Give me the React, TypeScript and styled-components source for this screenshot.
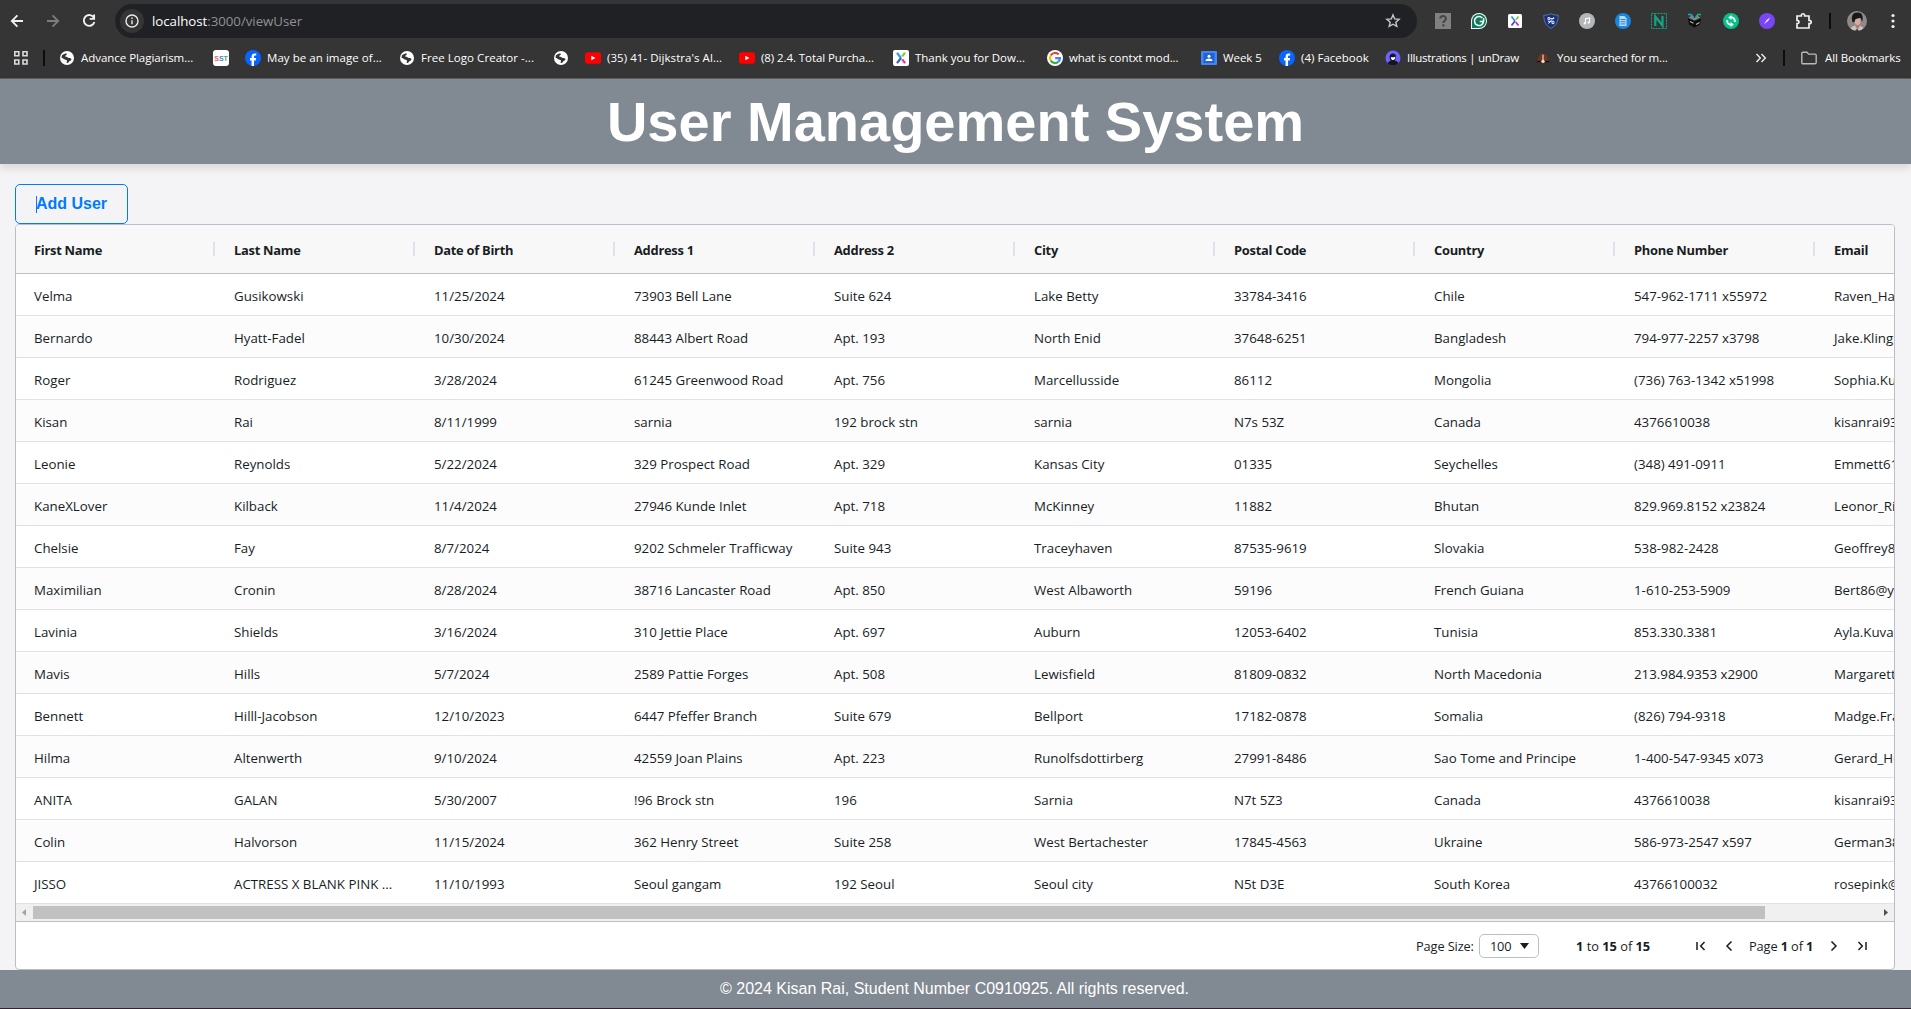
import React from "react";
import styled, { createGlobalStyle } from "styled-components";

const UI_FONT = `"Open Sans", "Noto Sans", sans-serif`;
const ARIAL = `"Liberation Sans", Arial, sans-serif`;

const GlobalStyle = createGlobalStyle`
  * { box-sizing: border-box; }
  body { margin: 0; background: #f4f4f7; overflow: hidden; }
  button { font: inherit; }
`;

const Screen = styled.div`
  width: 1911px;
  height: 1009px;
  display: flex;
  flex-direction: column;
  overflow: hidden;
  font-family: ${UI_FONT};
`;

/* ---------- browser chrome ---------- */

const Chrome = styled.div`
  flex: none;
  height: 79px;
  background: #353535;
  border-bottom: 1px solid #5b5d5f;
  color: #fff;
`;

const Toolbar = styled.div`
  height: 42px;
  display: flex;
  align-items: center;
`;

const NavButtons = styled.div`
  display: flex;
  gap: 18px;
  padding-left: 8px;
  width: 115px;
  svg { display: block; }
`;

const AddressBar = styled.div`
  width: 1302px;
  height: 34px;
  border-radius: 17px;
  background: #202124;
  display: flex;
  align-items: center;
  padding: 0 16px 0 5px;
`;

const InfoBadge = styled.span`
  width: 24px;
  height: 24px;
  border-radius: 50%;
  background: #353535;
  display: flex;
  align-items: center;
  justify-content: center;
  margin-right: 8px;
`;

const Url = styled.span`
  flex: 1;
  font-size: 13.3px;
  line-height: 20px;
  letter-spacing: -0.05px;
  color: #8f9194;
  b { font-weight: 400; color: #fff; }
`;

const Extensions = styled.div`
  display: flex;
  gap: 20px;
  margin-left: 18px;
  svg { display: block; }
`;

const Divider = styled.span<{ $left: number; $right: number }>`
  flex: none;
  width: 2px;
  height: 16px;
  background: #0c0c0c;
  margin-left: ${(p) => p.$left}px;
  margin-right: ${(p) => p.$right}px;
`;

const MoreDots = styled.svg`
  margin-left: 24px;
`;

const BookmarksBar = styled.div`
  height: 32px;
  display: flex;
  align-items: center;
  padding-left: 13px;
`;

const Bookmark = styled.div<{ $w: number; $gap?: number; $track?: number }>`
  flex: none;
  width: ${(p) => p.$w}px;
  display: flex;
  align-items: center;
  gap: ${(p) => p.$gap ?? 6}px;
  font-size: 11.5px;
  line-height: 16px;
  letter-spacing: ${(p) => p.$track ?? -0.08}px;
  white-space: nowrap;
  svg { flex: none; display: block; }
`;

/* ---------- page ---------- */

const Banner = styled.header`
  flex: none;
  height: 85px;
  background: #818a93;
  box-shadow: 0 4px 8px rgba(0, 0, 0, 0.12);
  display: flex;
  justify-content: center;
  padding-top: 11px;
  position: relative;
`;

const Title = styled.h1`
  margin: 0;
  font: bold 56px/64px ${ARIAL};
  color: #fff;
  white-space: nowrap;
`;

const Content = styled.main`
  flex: none;
  height: 806px;
  padding: 20px 16px 0 15px;
`;

const AddButton = styled.button`
  display: flex;
  align-items: center;
  width: 113px;
  height: 40px;
  padding: 0 20px;
  background: transparent;
  border: 1px solid #007bff;
  border-radius: 5px;
  color: #007bff;
  font: bold 16px/18px ${ARIAL};
  white-space: nowrap;
`;

const Caret = styled.i`
  width: 1px;
  height: 17px;
  margin: 0 -1px 0 0;
  background: #007bff;
`;

const Grid = styled.section`
  width: 1880px;
  height: 746px;
  border: 1px solid #babfc7;
  border-radius: 4px;
  overflow: hidden;
  background: #fff;
  color: #181d1f;
`;

const HeadRow = styled.div`
  display: flex;
  height: 49px;
  background: #f8f8f8;
  border-bottom: 1px solid #babfc7;
`;

const HeadCell = styled.div`
  flex: none;
  width: 200px;
  display: flex;
  align-items: center;
  justify-content: space-between;
  padding: 2px 1px 0 18px;
  font-size: 12.9px;
  font-weight: 700;
  letter-spacing: -0.27px;
  white-space: nowrap;
  &::after {
    content: "";
    width: 2px;
    height: 14px;
    margin-bottom: 3px;
    background: #dde2eb;
  }
`;

const Row = styled.div<{ $odd: boolean }>`
  display: flex;
  height: 42px;
  background: ${(p) => (p.$odd ? "#fcfcfc" : "#fff")};
  border-bottom: 1px solid #dde2eb;
`;

const Cell = styled.div`
  flex: none;
  width: 200px;
  height: 41px;
  padding: 1px 17px 0 18px;
  font-size: 13.3px;
  line-height: 43px;
  white-space: nowrap;
  overflow: hidden;
  text-overflow: ellipsis;
`;

const Scrollbar = styled.div`
  display: flex;
  align-items: center;
  height: 17px;
  background: #f0f0f0;
`;

const ScrollArrow = styled.svg`
  flex: none;
  width: 17px;
  height: 17px;
`;

const Track = styled.div`
  flex: 1;
`;

const Thumb = styled.div`
  width: 1732px;
  height: 13px;
  background: #c1c1c1;
`;

const Pager = styled.div`
  display: flex;
  align-items: center;
  height: 48px;
  border-top: 1px solid #babfc7;
  padding-left: 1400px;
  font-size: 12.8px;
  white-space: nowrap;
  svg { flex: none; display: block; }
`;

const PagerText = styled.span<{ $w: number; $track?: number }>`
  flex: none;
  width: ${(p) => p.$w}px;
  padding-top: 1px;
  letter-spacing: ${(p) => p.$track ?? -0.12}px;
`;

const SizeSelect = styled.div`
  flex: none;
  width: 60px;
  height: 24px;
  border: 1px solid #babfc7;
  border-radius: 5px;
  display: flex;
  align-items: center;
  justify-content: space-between;
  padding: 1px 9px 0 10px;
  margin-right: 37px;
  letter-spacing: -0.2px;
`;

const PagerIcon = styled.svg<{ $left?: number; $right?: number }>`
  margin-left: ${(p) => p.$left ?? 0}px;
  margin-right: ${(p) => p.$right ?? 0}px;
  fill: none;
  stroke: #181d1f;
  stroke-width: 1.5;
`;

const Footer = styled.footer`
  flex: none;
  height: 38px;
  padding-right: 2px;
  background: #818a93;
  color: #fff;
  font: 16px/37px ${ARIAL};
  text-align: center;
`;

const DesktopEdge = styled.div`
  height: 1px;
  background: #35222f;
`;

/* ---------- icons ---------- */

const Globe = () => (
  <svg width="16" height="16" viewBox="0 0 16 16">
    <circle cx="8" cy="8" r="7" fill="#fff" />
    <path d="M3 5.200C4.500 3.800 6.500 3.400 7.500 3.500c.8.500.2 1.500-.8 1.900-.9.400-.5 1.300.6 1.400 1.500.1 1.500 1.200 2.500 1.300 1.200.1 2.700.200 2.600 1.400-.3 1.300-1.900 1.200-2.400 2.200-.4.900-1.200 1.300-2.300 1.300-.3-.9.500-1.300.3-2.200-.4-1.200-2.200-.7-3.100-1.700-.6-.8-1.500-1.300-2.400-1.400z" fill="#353535" />
  </svg>
);

const FacebookIcon = () => (
  <svg width="16" height="16" viewBox="0 0 16 16">
    <circle cx="8" cy="8" r="8" fill="#0866ff" />
    <path d="M6.600 16v-5.500H5V8h1.600V6.800c0-2.300 1.100-3.400 3.300-3.400.5 0 1 .05 1.300.1v2.100h-.9c-1 0-1.300.4-1.300 1.300V8h2.100l-.4 2.500H9V16z" fill="#fff" />
  </svg>
);

const YouTubeIcon = () => (
  <svg width="16" height="16" viewBox="0 0 16 16">
    <rect y="2.200" width="16" height="11.600" rx="2.800" fill="#f00" />
    <path d="M6.300 5.700v4.600L10.500 8z" fill="#fff" />
  </svg>
);

const XmindIcon = () => (
  <svg width="16" height="16" viewBox="0 0 16 16">
    <rect width="16" height="16" rx="2" fill="#fff" />
    <path d="M4 2.800 8 8" stroke="#2a9fd8" strokeWidth="2.200" />
    <path d="M8 8 4 13.200" stroke="#3263c8" strokeWidth="2.200" />
    <path d="M12 2.800 9.200 6.400" stroke="#8bc53f" strokeWidth="2.200" />
    <path d="m9.200 9.400 2.900 3.800" stroke="#ef2b8d" strokeWidth="2.200" />
  </svg>
);

const SstIcon = () => (
  <svg width="16" height="16" viewBox="0 0 16 16">
    <rect width="16" height="16" rx="3" fill="#fff" />
    <text x="1.300" y="10.500" fontFamily="Liberation Sans, sans-serif" fontSize="7" fontWeight="700">
      <tspan fill="#e0686c">S</tspan>
      <tspan fill="#4a86c5">S</tspan>
      <tspan fill="#4aa583">T</tspan>
    </text>
  </svg>
);

const GoogleIcon = () => (
  <svg width="16" height="16" viewBox="0 0 16 16">
    <circle cx="8" cy="8" r="8" fill="#fff" />
    <g fill="none" strokeWidth="2.200">
      <path d="M11.700 4.500A5 5 0 0 0 3.700 5.500" stroke="#ea4335" />
      <path d="M3.700 5.500a5 5 0 0 0 0 5" stroke="#fbbc05" />
      <path d="M3.700 10.500a5 5 0 0 0 7.500 1.400" stroke="#34a853" />
      <path d="M11.200 11.900A5 5 0 0 0 13 8.200H8.200" stroke="#4285f4" />
    </g>
  </svg>
);

const ClassroomIcon = () => (
  <svg width="16" height="16" viewBox="0 0 16 16">
    <rect y="1" width="16" height="14" rx="1" fill="#4285f4" />
    <rect x="2.500" y="3" width="11" height="10" fill="#1f62d6" />
    <circle cx="8" cy="6.300" r="1.500" fill="#fff" />
    <path d="M4.500 11c0-1.700 1.600-2.400 3.500-2.400s3.500.7 3.500 2.400z" fill="#fff" />
  </svg>
);

const UndrawIcon = () => (
  <svg width="16" height="16" viewBox="0 0 16 16">
    <circle cx="8" cy="8" r="7.500" fill="#6c63ff" />
    <path d="M2.600 13.200C3 11.500 5 11 5.800 10.500 4.300 9 4 5.500 5.800 4.200c1.700-1.300 4.500-.8 5 1.300.4 1.800 0 3.600-1 4.900 1.500.6 3.300 1.200 3.600 2.800A7.500 7.500 0 0 1 2.600 13.200z" fill="#16151f" />
    <path d="M5.800 7.200c1.300.3 3.200.1 4.500-.4.2 1.900-.8 3.300-2.200 3.300-1.300 0-2.300-1.300-2.300-2.900z" fill="#fff" />
  </svg>
);

const BellIcon = () => (
  <svg width="16" height="16" viewBox="0 0 16 16">
    <path d="M1.500 11C3.500 8.500 3 4 7.200 3.800v8.600zM14.500 11C12.500 8.500 13 4 8.800 3.800v8.600z" fill="#6e3518" />
    <path d="M7.400 4.500h1.200v5L10 11.700 8 13.300 6 11.700l1.400-2.200z" fill="#f0dccb" />
    <path d="M1.800 11.500h3.800M10.400 11.500h3.800" stroke="#1a1210" strokeWidth="1.500" />
  </svg>
);

const BackArrow = () => (
  <svg width="18" height="18" viewBox="0 0 18 18" fill="none" stroke="#f1f1f1" strokeWidth="1.800">
    <path d="M15 9H4M9.400 3.400 3.800 9l5.600 5.600" />
  </svg>
);

const ForwardArrow = () => (
  <svg width="18" height="18" viewBox="0 0 18 18" fill="none" stroke="#7d7d7d" strokeWidth="1.800">
    <path d="M3 9h11M8.600 3.400 14.200 9l-5.600 5.600" />
  </svg>
);

const Reload = () => (
  <svg width="18" height="18" viewBox="0 0 18 18" fill="none" stroke="#f1f1f1" strokeWidth="1.900">
    <path d="M14 5.900A5.400 5.400 0 1 0 14.400 10" />
    <path d="M14.100 2.500v4.400H9.700" />
  </svg>
);

const Info = () => (
  <svg width="14" height="14" viewBox="0 0 14 14" fill="none" stroke="#e8eaed" strokeWidth="1.400">
    <circle cx="7" cy="7" r="6" />
    <path d="M7 6.300v4M7 3.500V5" />
  </svg>
);

const Star = () => (
  <svg width="16" height="16" viewBox="0 0 16 16" fill="none" stroke="#c7c7c7" strokeWidth="1.400">
    <path d="m8 1.900 1.700 4 4.400.4-3.300 2.900 1 4.200L8 11.200l-3.800 2.200 1-4.200-3.300-2.900 4.400-.4z" />
  </svg>
);

const AppsIcon = () => (
  <svg width="16" height="16" viewBox="0 0 16 16" fill="none" stroke="#dcdcdc" strokeWidth="1.600">
    <path d="M1.800 1.800h4v4h-4zM10 1.800h4v4h-4zM1.800 10h4v4h-4zM10 10h4v4h-4z" />
  </svg>
);

const Folder = () => (
  <svg width="16" height="14" viewBox="0 0 16 14" fill="none" stroke="#b9b9b9" strokeWidth="1.400">
    <path d="M.8 11.500V2.500q0-1.200 1.200-1.200h4l1.600 1.800H14q1.200 0 1.200 1.200v7.200q0 1.200-1.200 1.200H2q-1.200 0-1.200-1.200z" />
  </svg>
);

const PuzzleIcon = styled.svg`
  margin: -1px 0;
`;

const ExtensionIcons = () => (
  <Extensions>
    <svg width="16" height="16" viewBox="0 0 16 16">
      <rect width="16" height="16" fill="#808080" />
      <path d="M5.300 5.600C5.300 2.300 11 2.300 11 5.500c0 2-2.600 2.200-2.600 4.600" fill="none" stroke="#454545" strokeWidth="2" />
      <path d="M7.300 11.300h2.200v2.100H7.300z" fill="#454545" />
    </svg>
    <svg width="16" height="16" viewBox="0 0 16 16">
      <path d="M0 8a8 8 0 1 1 8 8H0z" fill="#fff" />
      <path d="M.9 8a7.100 7.100 0 1 1 7.100 7.100H.9z" fill="#0c7a5c" />
      <path d="M11.300 4.900a4.500 4.500 0 1 0 1.200 3.500H8.700M12.600 5.300v3.300" fill="none" stroke="#fff" strokeWidth="1.500" />
    </svg>
    <svg width="16" height="16" viewBox="0 0 16 16">
      <rect x="1" y="1" width="14" height="14" rx="1.500" fill="#fff" />
      <path d="M4.500 3.500 8 8" stroke="#2a9fd8" strokeWidth="1.800" />
      <path d="m8 8-3.500 4.500" stroke="#444dbd" strokeWidth="1.800" />
      <path d="M11.500 3.500 9 6.800" stroke="#8bc53f" strokeWidth="1.800" />
      <path d="m8.800 9 2.700 3.500" stroke="#bd2ec4" strokeWidth="1.800" />
    </svg>
    <svg width="16" height="16" viewBox="0 0 16 16">
      <path d="M.8 2.200C3.500 2.200 6 1.800 8 .6c2 1.200 4.500 1.600 7.200 1.600 0 6.500-2 10.500-7.200 13.200C2.800 12.700.8 8.700.8 2.200z" fill="#16307a" stroke="#7283b4" strokeWidth=".8" />
      <path d="M10.800 4.300 5.500 10.700M5 4.500h1.800v2.300H5zM9 8.200h1.900v2.400H9zM7.300 5.500h4M4.900 8.700h3.700" fill="none" stroke="#e5e9f5" strokeWidth="1" />
    </svg>
    <svg width="16" height="16" viewBox="0 0 16 16">
      <circle cx="8" cy="8" r="8" fill="#b5b8bb" />
      <path d="M6.500 10.300V5.700l4-.8v4.500" fill="none" stroke="#fff" strokeWidth="1.100" />
      <circle cx="5.700" cy="10.400" r="1.100" fill="#fff" />
      <circle cx="9.700" cy="9.600" r="1.100" fill="#fff" />
    </svg>
    <svg width="16" height="16" viewBox="0 0 16 16">
      <circle cx="8" cy="8" r="8" fill="#1c86dd" />
      <path d="M4.500 3h4.800l2.200 2.200v7.800h-7z" fill="#b9dcf8" />
      <path d="M5.500 6.500h5M5.500 8.700h5M5.500 10.900h5" stroke="#1c86dd" strokeWidth="1" />
    </svg>
    <svg width="16" height="16" viewBox="0 0 16 16">
      <rect x=".5" y=".5" width="15" height="15" fill="none" stroke="#12a584" strokeDasharray="2 1" />
      <path d="M4.300 13V3.500l7.200 9V3" fill="none" stroke="#12a584" strokeWidth="2.200" />
    </svg>
    <svg width="16" height="16" viewBox="0 0 16 16">
      <path d="M1 5.500 7.500 8v6.500L2 11.500zM14 5.500 7.500 8v6.500l5.500-3z" fill="#0d0d0d" />
      <path d="m1.500 4.500 3-1.700 3 2.200 3-2.200 3 1.700-6 3z" fill="#858585" />
      <path d="m3 8.500 3.500 1.700M9 11.500l3.500-2" stroke="#b5b5b5" strokeWidth="1.200" />
      <path d="M1 1.500h3l2.500 3" fill="none" stroke="#1aa7d9" strokeWidth="1.700" />
      <path d="M14 1.500h-3L8.700 4.500" fill="none" stroke="#19b97c" strokeWidth="1.700" />
    </svg>
    <svg width="16" height="16" viewBox="0 0 16 16">
      <circle cx="8" cy="8" r="8" fill="#08c18a" />
      <path d="M11.800 9V7.500A3.300 3.300 0 0 0 8 4.500M4.200 7v1.500A3.300 3.300 0 0 0 8 11.500" fill="none" stroke="#fff" strokeWidth="1.800" />
      <path d="M8.400 2v5L5.200 4.500zM7.600 9v5l3.200-2.500z" fill="#fff" />
    </svg>
    <svg width="16" height="16" viewBox="0 0 16 16">
      <circle cx="8" cy="8" r="8" fill="#7a45f5" />
      <path d="m5 11.200 2.800-4.500L11.300 4.200 9.200 8z" fill="#e9dcff" />
    </svg>
    <PuzzleIcon width="18" height="18" viewBox="0 0 18 18">
      <path d="M2 4h4.300c-.3-3 3.700-3 3.400 0H14v4.300c3 0 3 3.400 0 3.400V16H2v-4.300c2.600 0 2.600-3.400 0-3.400z" fill="none" stroke="#f1f1f1" strokeWidth="1.700" />
    </PuzzleIcon>
  </Extensions>
);

const Avatar = () => (
  <svg width="20" height="20" viewBox="0 0 20 20">
    <defs>
      <clipPath id="avatarClip">
        <circle cx="10" cy="10" r="10" />
      </clipPath>
    </defs>
    <g clipPath="url(#avatarClip)">
      <rect width="20" height="20" fill="#8f8a88" />
      <path d="M3 20c0-4 3.500-5.500 7-5.500s7 1.500 7 5.500z" fill="#c9c5c5" />
      <path d="M8.500 12h4v4l-2 2.500-2-2.500z" fill="#a98273" />
      <ellipse cx="10.600" cy="9.800" rx="3" ry="4.200" fill="#d3ada0" />
      <path d="M5.500 11C3.500 4.500 6.500 1.200 11 1.500c4.300.2 5.500 3.700 4.200 9.200-.8-1.500-1.300-3-2-4-1.500.8-4 .8-5.200 2 0 1.500-.5 3-2.500 2.300z" fill="#1a1718" />
      <path d="M10 18 12.500 20h-5z" fill="#27272b" />
    </g>
  </svg>
);

const BOOKMARKS: { icon: React.ReactNode; label?: string; w: number; track?: number }[] = [
  { icon: <Globe />, label: "Advance Plagiarism...", w: 154, track: -0.04 },
  { icon: <SstIcon />, w: 32 },
  { icon: <FacebookIcon />, label: "May be an image of...", w: 154, track: 0.05 },
  { icon: <Globe />, label: "Free Logo Creator -...", w: 154, track: 0.05 },
  { icon: <Globe />, w: 32 },
  { icon: <YouTubeIcon />, label: "(35) 41- Dijkstra's Al...", w: 154, track: 0.05 },
  { icon: <YouTubeIcon />, label: "(8) 2.4. Total Purcha...", w: 154 },
  { icon: <XmindIcon />, label: "Thank you for Dow...", w: 154, track: -0.02 },
  { icon: <GoogleIcon />, label: "what is contxt mod...", w: 154 },
  { icon: <ClassroomIcon />, label: "Week 5", w: 78 },
  { icon: <FacebookIcon />, label: "(4) Facebook", w: 106, track: 0.02 },
  { icon: <UndrawIcon />, label: "Illustrations | unDraw", w: 150, track: -0.28 },
  { icon: <BellIcon />, label: "You searched for m...", w: 220, track: -0.14 },
];

const COLUMNS = [
  "First Name", "Last Name", "Date of Birth", "Address 1", "Address 2",
  "City", "Postal Code", "Country", "Phone Number", "Email",
];

const USERS = [
  ["Velma", "Gusikowski", "11/25/2024", "73903 Bell Lane", "Suite 624", "Lake Betty", "33784-3416", "Chile", "547-962-1711 x55972", "Raven_Ha"],
  ["Bernardo", "Hyatt-Fadel", "10/30/2024", "88443 Albert Road", "Apt. 193", "North Enid", "37648-6251", "Bangladesh", "794-977-2257 x3798", "Jake.Kling"],
  ["Roger", "Rodriguez", "3/28/2024", "61245 Greenwood Road", "Apt. 756", "Marcellusside", "86112", "Mongolia", "(736) 763-1342 x51998", "Sophia.Ku"],
  ["Kisan", "Rai", "8/11/1999", "sarnia", "192 brock stn", "sarnia", "N7s 53Z", "Canada", "4376610038", "kisanrai93"],
  ["Leonie", "Reynolds", "5/22/2024", "329 Prospect Road", "Apt. 329", "Kansas City", "01335", "Seychelles", "(348) 491-0911", "Emmett61"],
  ["KaneXLover", "Kilback", "11/4/2024", "27946 Kunde Inlet", "Apt. 718", "McKinney", "11882", "Bhutan", "829.969.8152 x23824", "Leonor_Ri"],
  ["Chelsie", "Fay", "8/7/2024", "9202 Schmeler Trafficway", "Suite 943", "Traceyhaven", "87535-9619", "Slovakia", "538-982-2428", "Geoffrey8"],
  ["Maximilian", "Cronin", "8/28/2024", "38716 Lancaster Road", "Apt. 850", "West Albaworth", "59196", "French Guiana", "1-610-253-5909", "Bert86@y"],
  ["Lavinia", "Shields", "3/16/2024", "310 Jettie Place", "Apt. 697", "Auburn", "12053-6402", "Tunisia", "853.330.3381", "Ayla.Kuva"],
  ["Mavis", "Hills", "5/7/2024", "2589 Pattie Forges", "Apt. 508", "Lewisfield", "81809-0832", "North Macedonia", "213.984.9353 x2900", "Margarett"],
  ["Bennett", "Hilll-Jacobson", "12/10/2023", "6447 Pfeffer Branch", "Suite 679", "Bellport", "17182-0878", "Somalia", "(826) 794-9318", "Madge.Fra"],
  ["Hilma", "Altenwerth", "9/10/2024", "42559 Joan Plains", "Apt. 223", "Runolfsdottirberg", "27991-8486", "Sao Tome and Principe", "1-400-547-9345 x073", "Gerard_He"],
  ["ANITA", "GALAN", "5/30/2007", "!96 Brock stn", "196", "Sarnia", "N7t 5Z3", "Canada", "4376610038", "kisanrai93"],
  ["Colin", "Halvorson", "11/15/2024", "362 Henry Street", "Suite 258", "West Bertachester", "17845-4563", "Ukraine", "586-973-2547 x597", "German38"],
  ["JISSO", "ACTRESS X BLANK PINK ...", "11/10/1993", "Seoul gangam", "192 Seoul", "Seoul city", "N5t D3E", "South Korea", "43766100032", "rosepink@"],
];

const BrowserChrome = () => (
  <Chrome>
    <Toolbar>
      <NavButtons>
        <BackArrow />
        <ForwardArrow />
        <Reload />
      </NavButtons>
      <AddressBar>
        <InfoBadge><Info /></InfoBadge>
        <Url><b>localhost</b>:3000/viewUser</Url>
        <Star />
      </AddressBar>
      <ExtensionIcons />
      <Divider $left={16} $right={16} />
      <Avatar />
      <MoreDots width="4" height="16" viewBox="0 0 4 16" fill="#f1f1f1">
        <circle cx="2" cy="2.500" r="1.600" />
        <circle cx="2" cy="8" r="1.600" />
        <circle cx="2" cy="13.500" r="1.600" />
      </MoreDots>
    </Toolbar>
    <BookmarksBar>
      <AppsIcon />
      <Divider $left={14} $right={14} />
      {BOOKMARKS.map((b, i) => (
        <Bookmark key={i} $w={b.w} $track={b.track}>
          {b.icon}
          {b.label}
        </Bookmark>
      ))}
      <svg width="12" height="10" viewBox="0 0 12 10" fill="none" stroke="#e8e8e8" strokeWidth="1.500">
        <path d="M1.500 1 5.300 5 1.500 9M6.500 1l3.800 4-3.800 4" />
      </svg>
      <Divider $left={16} $right={16} />
      <Bookmark $w={102} $gap={8}>
        <Folder />
        All Bookmarks
      </Bookmark>
    </BookmarksBar>
  </Chrome>
);

const UserGrid = () => (
  <Grid>
    <HeadRow>
      {COLUMNS.map((c) => (
        <HeadCell key={c}>{c}</HeadCell>
      ))}
    </HeadRow>
    {USERS.map((user, i) => (
      <Row key={i} $odd={i % 2 === 1}>
        {user.map((value, j) => (
          <Cell key={j}>{value}</Cell>
        ))}
      </Row>
    ))}
    <Scrollbar>
      <ScrollArrow viewBox="0 0 17 17"><path d="M10 5v7L6 8.500z" fill="#a3a3a3" /></ScrollArrow>
      <Track><Thumb /></Track>
      <ScrollArrow viewBox="0 0 17 17"><path d="M7 5v7l4-3.500z" fill="#505050" /></ScrollArrow>
    </Scrollbar>
    <Pager>
      <PagerText $w={63}>Page Size:</PagerText>
      <SizeSelect>
        100
        <svg width="9" height="6" viewBox="0 0 9 6"><path d="M0 0h9L4.500 6z" fill="#181d1f" /></svg>
      </SizeSelect>
      <PagerText $w={120} $track={0}><b>1</b> to <b>15</b> of <b>15</b></PagerText>
      <PagerIcon width="10" height="10" viewBox="0 0 10 10" $right={19}><path d="M1 1v8M8.500 1 4.700 5l3.800 4" /></PagerIcon>
      <PagerIcon width="8" height="10" viewBox="0 0 8 10" $right={16}><path d="M6.500 .5 2 5l4.500 4.500" /></PagerIcon>
      <PagerText $w={64}>Page <b>1</b> of <b>1</b></PagerText>
      <PagerIcon width="8" height="10" viewBox="0 0 8 10" $left={17} $right={19}><path d="M1.500 .5 6 5 1.500 9.500" /></PagerIcon>
      <PagerIcon width="10" height="10" viewBox="0 0 10 10"><path d="M9 1v8M1.500 1l3.800 4-3.800 4" /></PagerIcon>
    </Pager>
  </Grid>
);

export default function App() {
  return (
    <Screen>
      <GlobalStyle />
      <BrowserChrome />
      <Banner>
        <Title>User Management System</Title>
      </Banner>
      <Content>
        <AddButton><Caret />Add User</AddButton>
        <UserGrid />
      </Content>
      <Footer>© 2024 Kisan Rai, Student Number C0910925. All rights reserved.</Footer>
      <DesktopEdge />
    </Screen>
  );
}
